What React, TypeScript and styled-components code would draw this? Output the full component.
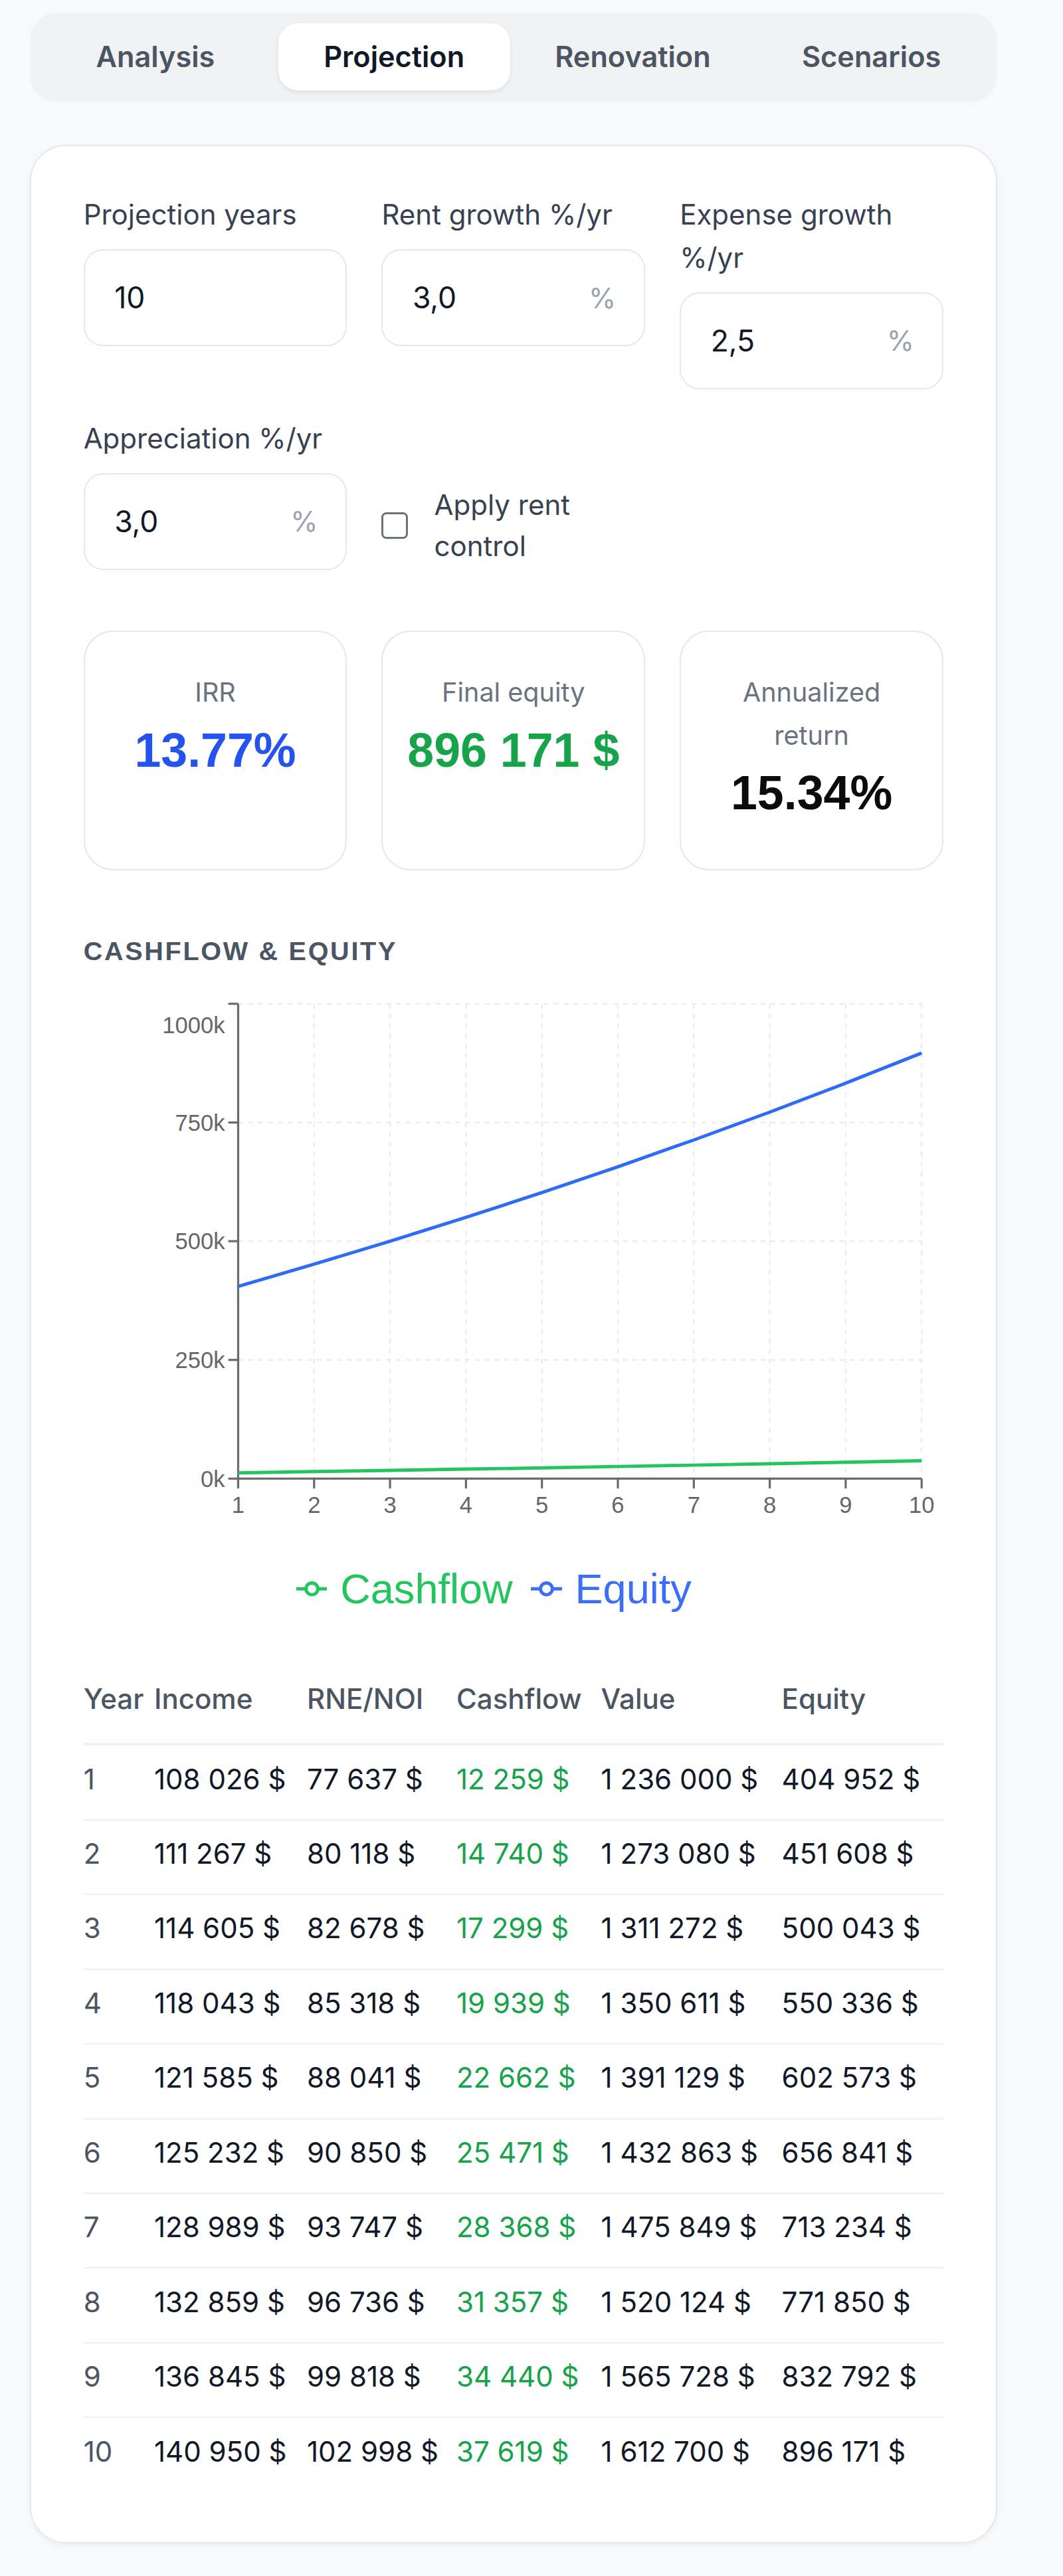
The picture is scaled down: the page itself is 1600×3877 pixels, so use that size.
import React from 'react';
import styled, { createGlobalStyle } from 'styled-components';

const GlobalStyle = createGlobalStyle`
  body {
    margin: 0;
    padding: 0;
    background: #f8f9fb;
    font-family: Inter, "Noto Sans", sans-serif;
    color: #111827;
  }
`;

const Page = styled.div`
  zoom: 2.473;
  width: 647px;
  min-height: 1568px;
  box-sizing: border-box;
  padding: 8px 40px 20px 18px;
`;

const TabBar = styled.nav`
  display: grid;
  grid-template-columns: repeat(4, 1fr);
  gap: 4px;
  padding: 6px 6px 7px;
  background: #f1f2f4;
  border-radius: 16px;
`;

const Tab = styled.div<{ $active?: boolean }>`
  height: 41px;
  display: flex;
  align-items: center;
  justify-content: center;
  border-radius: 12px;
  font-size: 17.5px;
  font-weight: 600;
  color: ${(p) => (p.$active ? '#111827' : '#4b5563')};
  background: ${(p) => (p.$active ? '#ffffff' : 'transparent')};
  box-shadow: ${(p) => (p.$active ? '0 1px 3px rgba(0,0,0,0.08)' : 'none')};
`;

const Card = styled.section`
  margin-top: 26px;
  background: #ffffff;
  border: 1px solid #e6e8eb;
  border-radius: 22px;
  padding: 29px 32px 31px;
  box-shadow: 0 1px 3px rgba(0, 0, 0, 0.05);
`;

const FieldGrid = styled.div`
  display: grid;
  grid-template-columns: repeat(3, 1fr);
  column-gap: 21px;
  row-gap: 17px;
  align-items: start;
`;

const Field = styled.div`
  display: flex;
  flex-direction: column;
`;

const Label = styled.div`
  font-size: 17px;
  line-height: 26px;
  color: #374151;
  margin-bottom: 8px;
`;

const InputBox = styled.div`
  height: 59px;
  box-sizing: border-box;
  border: 1px solid #e5e7eb;
  border-radius: 12px;
  display: flex;
  align-items: center;
  justify-content: space-between;
  padding: 0 17px 0 18px;
  font-size: 18px;
  color: #111827;
`;

const Suffix = styled.span`
  color: #9ca3af;
  font-size: 17px;
`;

const CheckField = styled.label`
  align-self: end;
  margin-bottom: 2px;
  display: flex;
  align-items: center;
  gap: 16px;
  font-size: 17px;
  line-height: 25px;
  color: #374151;
`;

const Box = styled.span`
  flex: none;
  width: 16px;
  height: 16px;
  box-sizing: border-box;
  border: 1.5px solid #6b7280;
  border-radius: 3px;
  background: #fff;
`;

const MetricGrid = styled.div`
  margin-top: 37px;
  display: grid;
  grid-template-columns: repeat(3, 1fr);
  gap: 21px;
`;

const Metric = styled.div`
  min-height: 146px;
  box-sizing: border-box;
  border: 1px solid #e5e7eb;
  border-radius: 18px;
  padding: 24px 6px 16px;
  text-align: center;
`;

const MetricLabel = styled.div`
  padding: 0 22px;
  font-size: 16px;
  line-height: 26px;
  color: #6b7280;
`;

const MetricValue = styled.div<{ $tone: 'blue' | 'green' | 'dark' }>`
  margin-top: 4px;
  font-family: "Liberation Sans", Arial, sans-serif;
  font-weight: 700;
  font-size: 29px;
  line-height: 36px;
  white-space: nowrap;
  color: ${(p) => (p.$tone === 'blue' ? '#2553f0' : p.$tone === 'green' ? '#16a34a' : '#0b0b0c')};
`;

const SectionTitle = styled.h3`
  margin: 38px 0 0;
  font-family: "Liberation Sans", Arial, sans-serif;
  font-size: 16px;
  line-height: 22px;
  font-weight: 700;
  letter-spacing: 1.1px;
  color: #4b5563;
`;

const ChartSvg = styled.svg`
  display: block;
  margin-top: 11px;
`;

const Legend = styled.div`
  display: flex;
  justify-content: center;
  gap: 11px;
  padding-right: 24px;
  font-family: "Liberation Sans", Arial, sans-serif;
  font-size: 25.5px;
  line-height: 30px;
`;

const LegendItem = styled.div<{ $color: string }>`
  display: flex;
  align-items: center;
  gap: 8px;
  color: ${(p) => p.$color};
`;

const Table = styled.table`
  margin-top: 40px;
  width: 100%;
  table-layout: fixed;
  border-collapse: collapse;
  font-size: 17px;
`;

const HeadCell = styled.th`
  text-align: left;
  font-weight: 500;
  color: #4b5563;
  line-height: 24px;
  padding: 0 2px 15px 0;
  border-bottom: 2px solid #f0f1f3;
  white-space: nowrap;
`;

const Row = styled.tr`
  & + & td {
    border-top: 1px solid #f0f1f3;
  }
`;

const Cell = styled.td<{ $tone?: 'muted' | 'green' }>`
  padding: 9px 2px 13px 0;
  line-height: 22.67px;
  white-space: nowrap;
  color: ${(p) => (p.$tone === 'muted' ? '#4b5563' : p.$tone === 'green' ? '#16a34a' : '#111827')};
`;

const fmt = (n: number) =>
  n.toString().replace(/\B(?=(\d{3})+(?!\d))/g, '\u00a0') + '\u00a0$';

const rows = [
  [1, 108026, 77637, 12259, 1236000, 404952],
  [2, 111267, 80118, 14740, 1273080, 451608],
  [3, 114605, 82678, 17299, 1311272, 500043],
  [4, 118043, 85318, 19939, 1350611, 550336],
  [5, 121585, 88041, 22662, 1391129, 602573],
  [6, 125232, 90850, 25471, 1432863, 656841],
  [7, 128989, 93747, 28368, 1475849, 713234],
  [8, 132859, 96736, 31357, 1520124, 771850],
  [9, 136845, 99818, 34440, 1565728, 832792],
  [10, 140950, 102998, 37619, 1612700, 896171],
];

const GREEN = '#22c55e';
const BLUE = '#2f6cf6';

// chart geometry (svg units)
const X0 = 94;
const X1 = 510;
const Y0 = 299;
const YTOP = 10;
const xAt = (i: number) => X0 + (i * (X1 - X0)) / 9;
const yAt = (v: number) => Y0 - (v / 1000000) * (Y0 - YTOP);

const Chart = () => {
  const yTicks = [0, 250000, 500000, 750000, 1000000];
  const path = (col: number) =>
    rows.map((r, i) => `${i === 0 ? 'M' : 'L'}${xAt(i).toFixed(1)},${yAt(r[col]).toFixed(1)}`).join(' ');
  return (
    <ChartSvg width={521} height={351} viewBox="0 0 521 351">
      <g stroke="#ebedf0" strokeDasharray="3 3" strokeWidth={1}>
        {yTicks.slice(1).map((t) => (
          <line key={t} x1={X0} x2={X1} y1={yAt(t)} y2={yAt(t)} />
        ))}
        {rows.map((_, i) => (
          <line key={i} x1={xAt(i)} x2={xAt(i)} y1={YTOP} y2={Y0} />
        ))}
      </g>
      <g stroke="#6b6b6b" strokeWidth={1.3}>
        <line x1={X0} x2={X0} y1={YTOP} y2={Y0} />
        <line x1={X0} x2={X1} y1={Y0} y2={Y0} />
        {yTicks.map((t) => (
          <line key={t} x1={X0 - 6} x2={X0} y1={yAt(t)} y2={yAt(t)} />
        ))}
        {rows.map((_, i) => (
          <line key={i} x1={xAt(i)} x2={xAt(i)} y1={Y0} y2={Y0 + 6} />
        ))}
      </g>
      <g fill="#666" fontFamily="Liberation Sans, Arial, sans-serif" fontSize={14}>
        {yTicks.map((t) => (
          <text
            key={t}
            x={X0 - 8}
            y={t === 1000000 ? yAt(t) + 18 : yAt(t) + 5}
            textAnchor="end"
          >
            {t / 1000}k
          </text>
        ))}
        {rows.map((r, i) => (
          <text key={i} x={xAt(i)} y={Y0 + 21} textAnchor="middle">
            {r[0]}
          </text>
        ))}
      </g>
      <path d={path(3)} fill="none" stroke={GREEN} strokeWidth={2} />
      <path d={path(5)} fill="none" stroke={BLUE} strokeWidth={2} />
    </ChartSvg>
  );
};

const LegendIcon = ({ color }: { color: string }) => (
  <svg width={19} height={14} viewBox="0 0 19 14">
    <line x1={0} x2={19} y1={7} y2={7} stroke={color} strokeWidth={2} />
    <circle cx={9.5} cy={7} r={3.6} fill="#fff" stroke={color} strokeWidth={2} />
  </svg>
);

export default function App() {
  return (
    <Page>
      <GlobalStyle />
      <TabBar>
        <Tab>Analysis</Tab>
        <Tab $active>Projection</Tab>
        <Tab>Renovation</Tab>
        <Tab>Scenarios</Tab>
      </TabBar>

      <Card>
        <FieldGrid>
          <Field>
            <Label>Projection years</Label>
            <InputBox>10</InputBox>
          </Field>
          <Field>
            <Label>Rent growth %/yr</Label>
            <InputBox>
              3,0<Suffix>%</Suffix>
            </InputBox>
          </Field>
          <Field>
            <Label>Expense growth %/yr</Label>
            <InputBox>
              2,5<Suffix>%</Suffix>
            </InputBox>
          </Field>
          <Field>
            <Label>Appreciation %/yr</Label>
            <InputBox>
              3,0<Suffix>%</Suffix>
            </InputBox>
          </Field>
          <CheckField>
            <Box />
            <span>Apply rent control</span>
          </CheckField>
        </FieldGrid>

        <MetricGrid>
          <Metric>
            <MetricLabel>IRR</MetricLabel>
            <MetricValue $tone="blue">13.77%</MetricValue>
          </Metric>
          <Metric>
            <MetricLabel>Final equity</MetricLabel>
            <MetricValue $tone="green">896 171 $</MetricValue>
          </Metric>
          <Metric>
            <MetricLabel>Annualized return</MetricLabel>
            <MetricValue $tone="dark">15.34%</MetricValue>
          </Metric>
        </MetricGrid>

        <SectionTitle>CASHFLOW &amp; EQUITY</SectionTitle>
        <Chart />
        <Legend>
          <LegendItem $color={GREEN}>
            <LegendIcon color={GREEN} />
            Cashflow
          </LegendItem>
          <LegendItem $color="#3d6ff5">
            <LegendIcon color="#3d6ff5" />
            Equity
          </LegendItem>
        </Legend>

        <Table>
          <colgroup>
            <col style={{ width: 43 }} />
            <col style={{ width: 93 }} />
            <col style={{ width: 91 }} />
            <col style={{ width: 88 }} />
            <col style={{ width: 110 }} />
            <col />
          </colgroup>
          <thead>
            <tr>
              <HeadCell>Year</HeadCell>
              <HeadCell>Income</HeadCell>
              <HeadCell>RNE/NOI</HeadCell>
              <HeadCell>Cashflow</HeadCell>
              <HeadCell>Value</HeadCell>
              <HeadCell>Equity</HeadCell>
            </tr>
          </thead>
          <tbody>
            {rows.map((r) => (
              <Row key={r[0]}>
                <Cell $tone="muted">{r[0]}</Cell>
                <Cell>{fmt(r[1])}</Cell>
                <Cell>{fmt(r[2])}</Cell>
                <Cell $tone="green">{fmt(r[3])}</Cell>
                <Cell>{fmt(r[4])}</Cell>
                <Cell>{fmt(r[5])}</Cell>
              </Row>
            ))}
          </tbody>
        </Table>
      </Card>
    </Page>
  );
}
